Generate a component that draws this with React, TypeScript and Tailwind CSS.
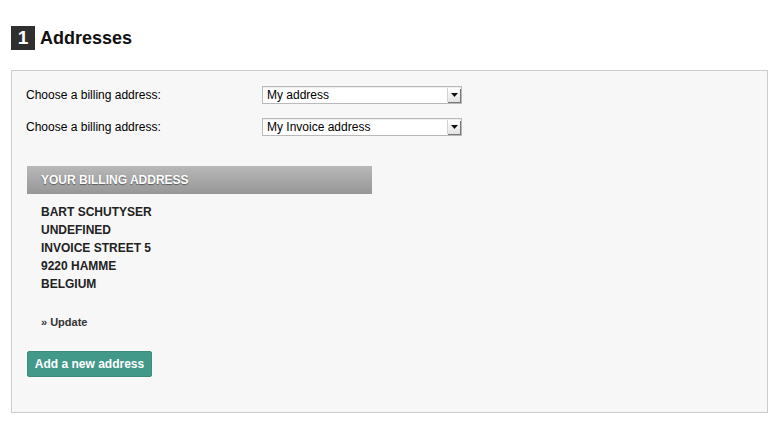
const font = { fontFamily: '"Liberation Sans", Arial, sans-serif' };

function FakeSelect({ value }: { value: string }) {
  return (
    <div className="flex h-[18px] w-[200px] items-stretch border border-[#b9b9b9] bg-white shadow-[inset_0_1px_1px_rgba(0,0,0,0.08)]">
      <span className="flex-1 pl-[4px] text-[12px] leading-[16px] text-black">{value}</span>
      <span className="my-[1px] mr-[1px] flex w-[13px] items-center justify-center border-l border-[#d0d0d0] bg-gradient-to-b from-white to-[#e4e4e4] shadow-[1px_1px_0_#777]">
        <svg width="7" height="4" viewBox="0 0 7 4">
          <path d="M0 0h7L3.5 4z" fill="#111" />
        </svg>
      </span>
    </div>
  );
}

export default function App() {
  const lines = ["BART SCHUTYSER", "UNDEFINED", "INVOICE STREET 5", "9220 HAMME", "BELGIUM"];

  return (
    <div className="min-h-[429px] bg-white px-[11px] pt-[26px] text-[#222]" style={font}>
      <div className="flex h-[24px] items-center gap-[5px]">
        <span className="flex h-[24px] w-[24px] items-center justify-center bg-[#2f2f2f] text-[19px] font-bold text-white">
          1
        </span>
        <h1 className="text-[18px] font-bold leading-[24px] text-[#111]">Addresses</h1>
      </div>

      <div className="mt-[20px] h-[343px] w-[757px] border border-[#cccccc] bg-[#f7f7f7] px-[15px] pt-[15px]">
        <div className="-ml-[1px] flex items-center">
          <span className="w-[236px] text-[12px] text-black">Choose a billing address:</span>
          <FakeSelect value="My address" />
        </div>
        <div className="-ml-[1px] mt-[14px] flex items-center">
          <span className="w-[236px] text-[12px] text-black">Choose a billing address:</span>
          <FakeSelect value="My Invoice address" />
        </div>

        <div className="mt-[30px] w-[345px]">
          <div className="flex h-[28px] items-center bg-gradient-to-b from-[#b8b8b8] to-[#979797] pl-[14px] text-[12px] font-bold uppercase text-white [text-shadow:0_1px_1px_rgba(0,0,0,0.45)]">
            Your billing address
          </div>
          <div className="pl-[14px] pt-[9px]">
            {lines.map((l) => (
              <div key={l} className="text-[12px] font-bold leading-[18px] text-[#222]">
                {l}
              </div>
            ))}
            <div className="mt-[20px] text-[11px] font-bold leading-[18px] text-[#333]">» Update</div>
          </div>
        </div>

        <button
          type="button"
          className="mt-[20px] h-[26px] w-[125px] rounded-[2px] border border-[#3a8f7c] bg-[#42998a] text-[12px] font-bold text-white"
        >
          Add a new address
        </button>
      </div>
    </div>
  );
}
